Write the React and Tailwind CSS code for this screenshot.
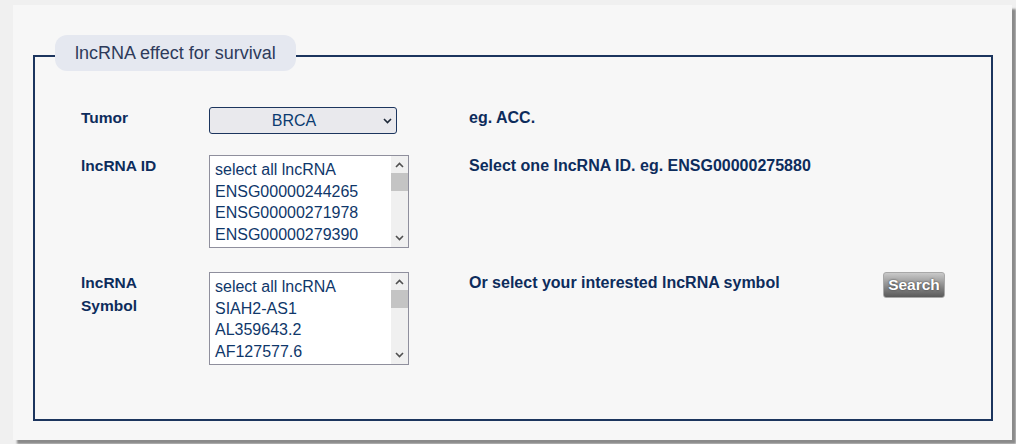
import React from "react";

const font = { fontFamily: '"Liberation Sans", Arial, sans-serif' };

function Chevron({ up = false, className = "" }) {
  return (
    <svg width="9" height="6" viewBox="0 0 9 6" className={className}>
      <polyline
        points={up ? "1,5 4.5,1.5 8,5" : "1,1 4.5,4.5 8,1"}
        fill="none"
        stroke="currentColor"
        strokeWidth="1.6"
      />
    </svg>
  );
}

function ListBox({ items }) {
  return (
    <div className="flex w-[200px] h-[93px] border border-[#8f8f9d] bg-white">
      <div className="flex-1 overflow-hidden pt-[3px] pl-[5px] text-[16px] text-[#0f376a]">
        {items.map((it) => (
          <div key={it} className="h-[21.5px] leading-[21.5px] whitespace-nowrap">
            {it}
          </div>
        ))}
      </div>
      <div className="w-[17px] bg-[#f0f0f0] flex flex-col">
        <div className="h-[17px] flex items-center justify-center text-[#505050]">
          <Chevron up />
        </div>
        <div className="h-[18px] bg-[#c4c4c4]" />
        <div className="flex-1" />
        <div className="h-[19px] flex items-center justify-center text-[#505050]">
          <Chevron />
        </div>
      </div>
    </div>
  );
}

export default function App() {
  return (
    <div className="min-h-[444px] bg-[#f0f0f0] pt-[5px] pl-[13px]" style={font}>
      <div className="w-[999px] h-[435px] bg-[#f7f7f7] pt-[50px] pl-[20px] shadow-[4px_4px_2px_#8a8a8a]">
        <div className="relative w-[960px] h-[366px] border-2 border-[#1c355e] pt-[50px] pl-[46px]">
          <div className="absolute left-[20px] top-[-22px] h-[36px] px-[20px] rounded-[12px] bg-[#e5e8f0] text-[18px] leading-[36px] text-[#2e3b5b] whitespace-nowrap">
            lncRNA effect for survival
          </div>

          {/* Row 1 */}
          <div className="flex items-start h-[27px]">
            <div className="w-[128px] text-[15.5px] leading-[22.5px] font-bold text-[#0d2c5c]">
              Tumor
            </div>
            <div className="w-[260px]">
              <div className="flex w-[188px] h-[27px] border border-[#1c355e] rounded-[3px] bg-[#e9e9ed] items-center">
                <div className="flex-1 text-center text-[16px] text-[#0b3b70]">BRCA</div>
                <div className="w-[18px] flex justify-center text-[#1f2a3a]">
                  <Chevron />
                </div>
              </div>
            </div>
            <div className="text-[16px] leading-[22.5px] font-bold text-[#0d2c5c]">eg. ACC.</div>
          </div>

          {/* Row 2 */}
          <div className="flex items-start mt-[21px]">
            <div className="w-[128px] text-[15.5px] leading-[22.5px] font-bold text-[#0d2c5c]">
              lncRNA ID
            </div>
            <div className="w-[260px]">
              <ListBox
                items={["select all lncRNA", "ENSG00000244265", "ENSG00000271978", "ENSG00000279390"]}
              />
            </div>
            <div className="text-[16px] leading-[22.5px] font-bold text-[#0d2c5c]">
              Select one lncRNA ID. eg. ENSG00000275880
            </div>
          </div>

          {/* Row 3 */}
          <div className="flex items-start mt-[24px]">
            <div className="w-[128px] text-[15.5px] leading-[22.5px] font-bold text-[#0d2c5c]">
              lncRNA
              <br />
              Symbol
            </div>
            <div className="w-[260px]">
              <ListBox items={["select all lncRNA", "SIAH2-AS1", "AL359643.2", "AF127577.6"]} />
            </div>
            <div className="w-[414px] text-[16px] leading-[22.5px] font-bold text-[#0d2c5c]">
              Or select your interested lncRNA symbol
            </div>
            <button className="w-[62px] h-[26px] rounded-[3px] border border-[#a8a8a8] bg-gradient-to-b from-[#cacaca] to-[#5a5a5a] text-white font-bold text-[15.5px] leading-[24px] [text-shadow:0_0_2px_#333]">
              Search
            </button>
          </div>
        </div>
      </div>
    </div>
  );
}
